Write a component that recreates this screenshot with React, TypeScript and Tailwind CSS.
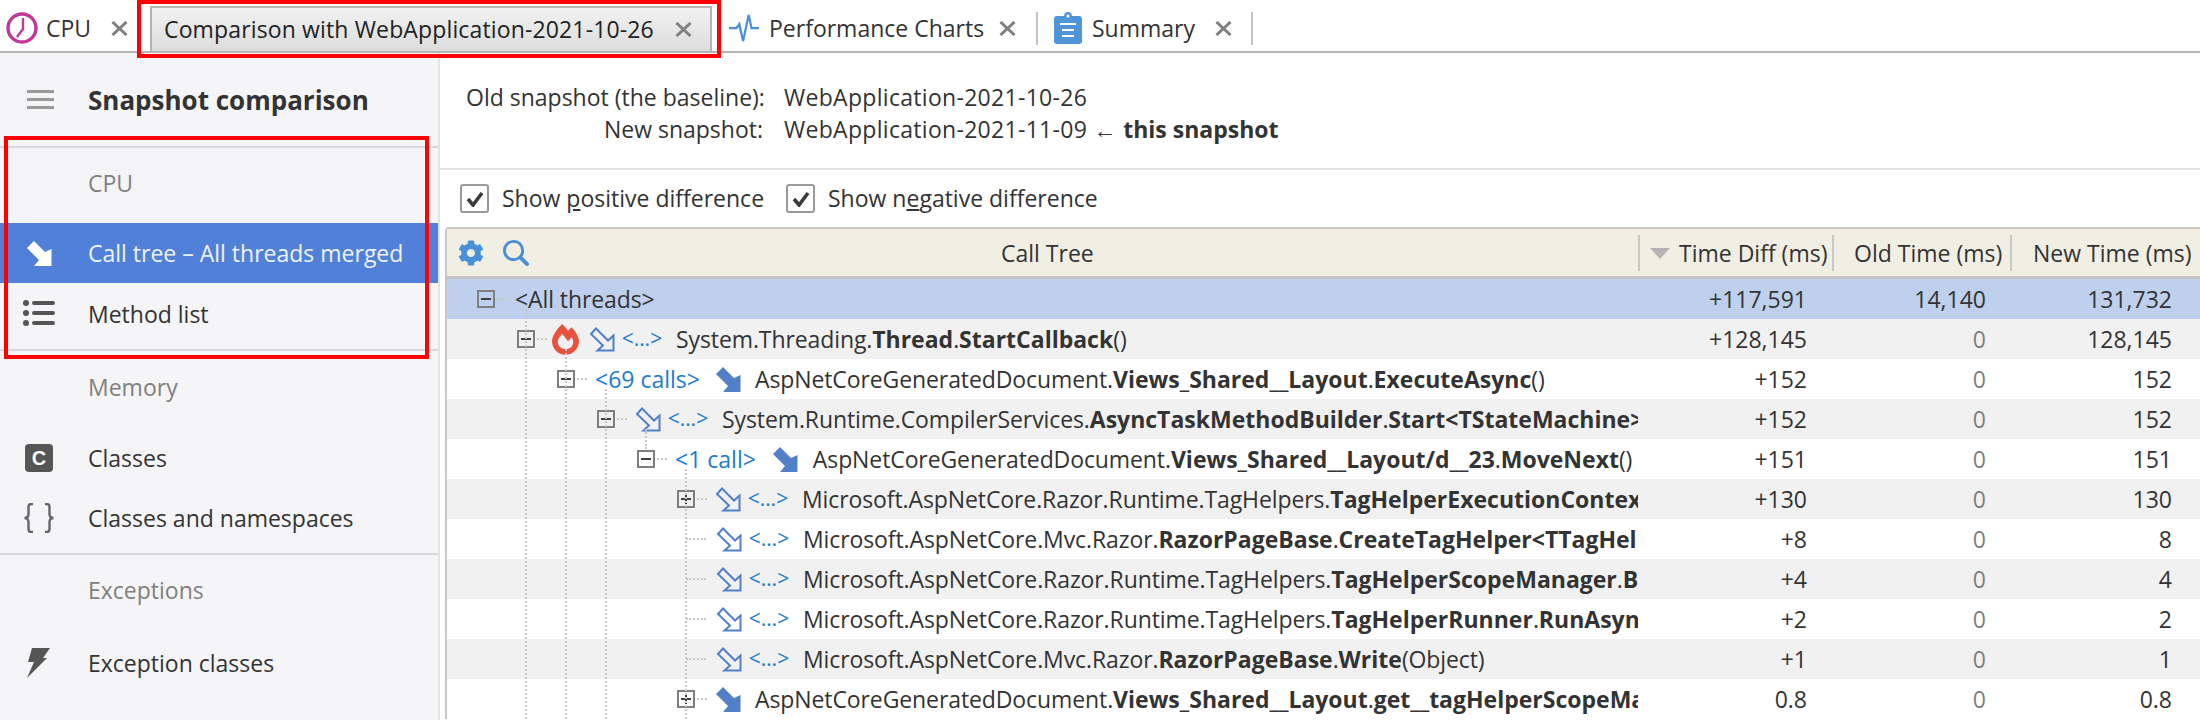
import React from "react";
import { FaCog, FaFireAlt } from "react-icons/fa";

function CloseIcon() {
  return (
    <svg viewBox="0 0 17 15" className="h-[15px] w-[17px] shrink-0">
      <path d="M1.5 1 L15.5 14 M15.5 1 L1.5 14" stroke="#808080" strokeWidth="3" fill="none" />
    </svg>
  );
}

function ClockIcon() {
  return (
    <svg viewBox="0 0 32 32" className="h-[32px] w-[32px] shrink-0">
      <circle cx="16" cy="16" r="14" fill="none" stroke="#c0399a" strokeWidth="3.4" />
      <path d="M17 6 L17 17 L11 25" fill="none" stroke="#c0399a" strokeWidth="2.4" />
    </svg>
  );
}

function PulseIcon() {
  return (
    <svg viewBox="0 0 32 32" className="h-[30px] w-[32px] shrink-0">
      <path d="M0 16 H8 L11 12 L15 30 L21 2 L24 16 H32" fill="none" stroke="#4a90d9" strokeWidth="2.4" />
    </svg>
  );
}

function ClipboardIcon() {
  return (
    <svg viewBox="0 0 28 32" className="h-[32px] w-[28px] shrink-0">
      <path d="M3 4 H10 Q10.5 0 14 0 Q17.5 0 18 4 H25 Q28 4 28 7 V29 Q28 32 25 32 H3 Q0 32 0 29 V7 Q0 4 3 4 Z" fill="#4f96d9" />
      <path d="M6 12 H22 M8 18 H20 M8 24 H20" stroke="#fff" strokeWidth="2.2" />
      <circle cx="14" cy="4" r="1.5" fill="#fff" />
    </svg>
  );
}

function CallArrow({ kind }: { kind: "filled" | "outline" | "white" }) {
  if (kind === "outline") {
    return (
      <svg viewBox="0 0 26 25" className="h-[25px] w-[26px] shrink-0">
        <path d="M7 1.5 L19 13.5 L24.5 8.5 V23.5 H8.5 L14 18.5 L2 7 Z" fill="none" stroke="#5180c8" strokeWidth="2" />
      </svg>
    );
  }
  return (
    <svg viewBox="0 0 26 25" className="h-[25px] w-[26px] shrink-0">
      <path d="M8 0 L19 11 L25.5 8 V25 H8 L13 19 L1 7 Z" fill={kind === "white" ? "#ffffff" : "#5180c8"} />
    </svg>
  );
}

function Expander({ open }: { open: boolean }) {
  return (
    <span className="flex h-[18px] w-[18px] shrink-0 items-center justify-center border-2 border-[#7f7f7f]">
      <svg viewBox="0 0 12 12" className="h-[12px] w-[12px]">
        <path d={open ? "M1 6 H11" : "M1 6 H11 M6 1 V11"} stroke="#404040" strokeWidth="2" />
      </svg>
    </span>
  );
}

function Dots() {
  return <span className="ml-[2px] mr-[8px] w-[10px] shrink-0 border-t-2 border-dotted border-[#c8c8c8]" />;
}

function LeafDots() {
  return <span className="ml-[9px] mr-[10px] w-[20px] shrink-0 border-t-2 border-dotted border-[#c8c8c8]" />;
}

function Calls({ children }: { children: React.ReactNode }) {
  return <span className="shrink-0 text-[#1c7cd0]">{children}</span>;
}

function Hidden() {
  return (
    <span className="ml-[6px] mr-[13px] w-[42px] shrink-0 text-center text-[21px] text-[#1c7cd0]">&lt;…&gt;</span>
  );
}

type RowData = {
  pad: string;
  bg: string;
  lead: React.ReactNode;
  name: React.ReactNode;
  diff: string;
  old: string;
  next: string;
};

const B = ({ children }: { children: React.ReactNode }) => <b className="font-bold tracking-normal">{children}</b>;

const rows: RowData[] = [
  {
    pad: "pl-[30px]",
    bg: "bg-[#bed0ed]",
    lead: (
      <>
        <Expander open />
        <Dots />
      </>
    ),
    name: <>&lt;All threads&gt;</>,
    diff: "+117,591",
    old: "14,140",
    next: "131,732",
  },
  {
    pad: "pl-[70px]",
    bg: "bg-[#f1f1f1]",
    lead: (
      <>
        <Expander open />
        <span className="ml-[2px] mr-[5px] w-[10px] shrink-0 border-t-2 border-dotted border-[#c8c8c8]" />
        <FaFireAlt className="mr-[10px] h-[31px] w-[27px] shrink-0 text-[#e8533f]" />
        <CallArrow kind="outline" />
        <Hidden />
      </>
    ),
    name: (
      <>
        System.Threading.<B>Thread</B>.<B>StartCallback</B>()
      </>
    ),
    diff: "+128,145",
    old: "0",
    next: "128,145",
  },
  {
    pad: "pl-[110px]",
    bg: "bg-white",
    lead: (
      <>
        <Expander open />
        <Dots />
        <Calls>&lt;69 calls&gt;</Calls>
        <span className="w-[15px] shrink-0" />
        <CallArrow kind="filled" />
        <span className="w-[14px] shrink-0" />
      </>
    ),
    name: (
      <>
        AspNetCoreGeneratedDocument.<B>Views_Shared__Layout</B>.<B>ExecuteAsync</B>()
      </>
    ),
    diff: "+152",
    old: "0",
    next: "152",
  },
  {
    pad: "pl-[150px]",
    bg: "bg-[#f1f1f1]",
    lead: (
      <>
        <Expander open />
        <Dots />
        <CallArrow kind="outline" />
        <Hidden />
      </>
    ),
    name: (
      <>
        System.Runtime.CompilerServices.<B>AsyncTaskMethodBuilder</B>.<B>Start&lt;TStateMachine&gt;</B>
      </>
    ),
    diff: "+152",
    old: "0",
    next: "152",
  },
  {
    pad: "pl-[190px]",
    bg: "bg-white",
    lead: (
      <>
        <Expander open />
        <Dots />
        <Calls>&lt;1 call&gt;</Calls>
        <span className="w-[16px] shrink-0" />
        <CallArrow kind="filled" />
        <span className="w-[15px] shrink-0" />
      </>
    ),
    name: (
      <>
        AspNetCoreGeneratedDocument.<B>Views_Shared__Layout/d__23</B>.<B>MoveNext</B>()
      </>
    ),
    diff: "+151",
    old: "0",
    next: "151",
  },
  {
    pad: "pl-[230px]",
    bg: "bg-[#f1f1f1]",
    lead: (
      <>
        <Expander open={false} />
        <Dots />
        <CallArrow kind="outline" />
        <Hidden />
      </>
    ),
    name: (
      <>
        Microsoft.AspNetCore.Razor.Runtime.TagHelpers.<B>TagHelperExecutionContext</B>
      </>
    ),
    diff: "+130",
    old: "0",
    next: "130",
  },
  {
    pad: "pl-[230px]",
    bg: "bg-white",
    lead: (
      <>
        <LeafDots />
        <CallArrow kind="outline" />
        <Hidden />
      </>
    ),
    name: (
      <>
        Microsoft.AspNetCore.Mvc.Razor.<B>RazorPageBase</B>.<B>CreateTagHelper&lt;TTagHelper&gt;</B>
      </>
    ),
    diff: "+8",
    old: "0",
    next: "8",
  },
  {
    pad: "pl-[230px]",
    bg: "bg-[#f1f1f1]",
    lead: (
      <>
        <LeafDots />
        <CallArrow kind="outline" />
        <Hidden />
      </>
    ),
    name: (
      <>
        Microsoft.AspNetCore.Razor.Runtime.TagHelpers.<B>TagHelperScopeManager</B>.<B>Begin</B>
      </>
    ),
    diff: "+4",
    old: "0",
    next: "4",
  },
  {
    pad: "pl-[230px]",
    bg: "bg-white",
    lead: (
      <>
        <LeafDots />
        <CallArrow kind="outline" />
        <Hidden />
      </>
    ),
    name: (
      <>
        Microsoft.AspNetCore.Razor.Runtime.TagHelpers.<B>TagHelperRunner</B>.<B>RunAsync</B>
      </>
    ),
    diff: "+2",
    old: "0",
    next: "2",
  },
  {
    pad: "pl-[230px]",
    bg: "bg-[#f1f1f1]",
    lead: (
      <>
        <LeafDots />
        <CallArrow kind="outline" />
        <Hidden />
      </>
    ),
    name: (
      <>
        Microsoft.AspNetCore.Mvc.Razor.<B>RazorPageBase</B>.<B>Write</B>(Object)
      </>
    ),
    diff: "+1",
    old: "0",
    next: "1",
  },
  {
    pad: "pl-[230px]",
    bg: "bg-white",
    lead: (
      <>
        <Expander open={false} />
        <Dots />
        <CallArrow kind="filled" />
        <span className="w-[14px] shrink-0" />
      </>
    ),
    name: (
      <>
        AspNetCoreGeneratedDocument.<B>Views_Shared__Layout</B>.<B>get__tagHelperScopeManager</B>
      </>
    ),
    diff: "0.8",
    old: "0",
    next: "0.8",
  },
];

function NavItem({ icon, label, active, nudge }: { icon: React.ReactNode; label: string; active?: boolean; nudge?: string }) {
  return (
    <div className={`flex h-[60px] items-center ${active ? "bg-[#5180d8] text-[#eef3fb]" : "text-[#333333]"}`}>
      <span className="flex w-[88px] shrink-0 justify-center pr-[10px]">{icon}</span>
      <span className={nudge}>{label}</span>
    </div>
  );
}

function SectionLabel({ label, box }: { label: string; box: string }) {
  return <div className={`flex items-center pl-[88px] text-[#808080] ${box}`}>{label}</div>;
}

function Checkbox() {
  return (
    <span className="flex h-[29px] w-[29px] shrink-0 items-center justify-center rounded-[3px] border-2 border-[#9a9a9a] bg-white">
      <svg viewBox="0 0 18 16" className="h-[16px] w-[18px]">
        <path d="M2 8 L7 14 L16 2" fill="none" stroke="#3c3c3c" strokeWidth="3.6" />
      </svg>
    </span>
  );
}

export default function App() {
  return (
    <div className="relative h-[720px] w-[2200px] overflow-hidden bg-white font-['Open_Sans',sans-serif] text-[23px] text-[#333333]">
      {/* Tabs */}
      <div className="flex h-[53px] items-center border-b-2 border-[#b5b5b5] pt-[5px]">
        <span className="ml-[6px]">
          <ClockIcon />
        </span>
        <span className="ml-[8px] w-[65px]">CPU</span>
        <CloseIcon />
        <div className="ml-[22px] flex h-[45px] w-[562px] items-center self-end border-2 border-b-0 border-[#b5b5b5] bg-gradient-to-b from-[#f2f2f2] to-[#dcdcdc] pl-[12px] text-[#222222]">
          <span className="w-[511px] whitespace-nowrap tracking-[0.14px]">Comparison with WebApplication-2021-10-26</span>
          <CloseIcon />
        </div>
        <span className="ml-[16px]">
          <PulseIcon />
        </span>
        <span className="ml-[9px] w-[230px] whitespace-nowrap">Performance Charts</span>
        <CloseIcon />
        <span className="ml-[20px] h-[33px] w-[2px] bg-[#c4c4c4]" />
        <span className="ml-[16px]">
          <ClipboardIcon />
        </span>
        <span className="ml-[10px] w-[123px]">Summary</span>
        <CloseIcon />
        <span className="ml-[19px] h-[33px] w-[2px] bg-[#c4c4c4]" />
      </div>

      <div className="flex h-[667px]">
        {/* Sidebar */}
        <div className="w-[440px] shrink-0 border-r-2 border-[#e4e4e4] bg-[#f5f5f8]">
          <div className="flex h-[95px] items-center border-b-2 border-[#d8d8d8]">
            <span className="ml-[27px] flex w-[27px] flex-col gap-[5px]">
              <span className="h-[3px] bg-[#9a9a9a]" />
              <span className="h-[3px] bg-[#9a9a9a]" />
              <span className="h-[3px] bg-[#9a9a9a]" />
            </span>
            <span className="ml-[34px] pt-[2px] text-[26px] font-bold text-[#333333]">Snapshot comparison</span>
          </div>
          <SectionLabel label="CPU" box="h-[75px] pb-[5px]" />
          <NavItem active nudge="pt-[1px]" label="Call tree – All threads merged" icon={<CallArrow kind="white" />} />
          <NavItem
            nudge="pt-[3px]"
            label="Method list"
            icon={
              <svg viewBox="0 0 32 26" className="h-[26px] w-[32px]">
                <circle cx="3" cy="3" r="3" fill="#555" />
                <circle cx="3" cy="13" r="3" fill="#555" />
                <circle cx="3" cy="23" r="3" fill="#555" />
                <path d="M11 3 H30 M11 13 H30 M11 23 H30" stroke="#555" strokeWidth="4" strokeLinecap="round" />
              </svg>
            }
          />
          <div className="mt-[6px] border-t-2 border-[#d8d8d8]" />
          <SectionLabel label="Memory" box="h-[77px] pb-[4px]" />
          <NavItem
            label="Classes"
            icon={
              <span className="flex h-[28px] w-[28px] items-center justify-center rounded-[4px] bg-[#555555] font-['Liberation_Sans',sans-serif] text-[20px] font-bold text-white">
                C
              </span>
            }
          />
          <NavItem
            label="Classes and namespaces"
            icon={
              <svg viewBox="0 0 32 30" className="h-[30px] w-[32px]">
                <path
                  d="M10 1 H8 Q5.5 1 5.5 4 V11 Q5.5 15 1.5 15 Q5.5 15 5.5 19 V26 Q5.5 29 8 29 H10 M22 1 H24 Q26.5 1 26.5 4 V11 Q26.5 15 30.5 15 Q26.5 15 26.5 19 V26 Q26.5 29 24 29 H22"
                  fill="none"
                  stroke="#666"
                  strokeWidth="2.4"
                />
              </svg>
            }
          />
          <div className="mt-[5px] border-t-2 border-[#d8d8d8]" />
          <SectionLabel label="Exceptions" box="h-[78px] pb-[7px]" />
          <NavItem
            label="Exception classes"
            icon={
              <svg viewBox="0 0 24 30" className="h-[30px] w-[24px]">
                <path d="M5 0 H23 L16 10 H20 L0 30 L7 14 H1 Z" fill="#555" />
              </svg>
            }
          />
        </div>

        {/* Main */}
        <div className="min-w-0 flex-1">
          <div className="h-[117px] border-b-2 border-[#e2e2e2] pl-[26px] pt-[28px]">
            <div className="flex h-[32px] items-center">
              <span className="w-[297px] whitespace-nowrap text-right">Old snapshot (the baseline):</span>
              <span className="ml-[21px] tracking-[0.3px]">WebApplication-2021-10-26</span>
            </div>
            <div className="flex h-[32px] items-center">
              <span className="w-[297px] text-right">New snapshot:</span>
              <span className="ml-[21px] tracking-[0.3px]">WebApplication-2021-11-09</span>
              <span className="ml-[6px]">←</span>
              <b className="ml-[7px] font-bold">this snapshot</b>
            </div>
          </div>

          <div className="flex h-[57px] items-center pl-[20px]">
            <Checkbox />
            <span className="ml-[13px] w-[284px] whitespace-nowrap">
              Show <u>p</u>ositive difference
            </span>
            <Checkbox />
            <span className="ml-[13px] whitespace-nowrap">
              Show n<u>e</u>gative difference
            </span>
          </div>

          {/* Table */}
          <div className="relative ml-[5px] rounded-tl-[4px] border-l-2 border-t-2 border-[#c8c8c8]">
            <div className="flex h-[50px] items-center border-b-[3px] border-[#c4c4c4] bg-[#f1eee3]">
              <div className="flex w-[1191px] shrink-0 items-center pl-[11px]">
                <FaCog className="h-[26px] w-[26px] text-[#4a90d9]" />
                <svg viewBox="0 0 28 28" className="ml-[18px] h-[27px] w-[27px]">
                  <circle cx="12" cy="12" r="9.5" fill="none" stroke="#4a90d9" strokeWidth="3" />
                  <path d="M19 19 L26 26" stroke="#4a90d9" strokeWidth="4" strokeLinecap="round" />
                </svg>
                <span className="ml-[472px] pt-[2px]">Call Tree</span>
              </div>
              <div className="flex h-[36px] w-[194px] shrink-0 items-center border-l-2 border-[#c8c8c8] pl-[10px] pt-[2px]">
                <span className="h-0 w-0 border-x-[10px] border-t-[11px] border-x-transparent border-t-[#b4b4b4]" />
                <span className="ml-[9px] whitespace-nowrap">Time Diff (ms)</span>
              </div>
              <div className="flex h-[36px] w-[178px] shrink-0 items-center whitespace-nowrap border-l-2 border-[#c8c8c8] pl-[20px] pt-[2px]">
                Old Time (ms)
              </div>
              <div className="flex h-[36px] flex-1 items-center whitespace-nowrap border-l-2 border-[#c8c8c8] pl-[21px] pt-[2px]">
                New Time (ms)
              </div>
            </div>

            <div className="relative">
              {rows.map((row, i) => (
                <div key={i} className={`flex h-[40px] items-center ${row.bg}`}>
                  <div className={`flex w-[1191px] shrink-0 items-center overflow-hidden whitespace-nowrap ${row.pad}`}>
                    {row.lead}
                    <span className="tracking-[-0.1px]">{row.name}</span>
                  </div>
                  <div className="w-[194px] shrink-0 pr-[25px] text-right">{row.diff}</div>
                  <div className={`w-[178px] shrink-0 pr-[24px] text-right ${row.old === "0" ? "text-[#7f7f7f]" : ""}`}>
                    {row.old}
                  </div>
                  <div className="flex-1 pr-[28px] text-right">{row.next}</div>
                </div>
              ))}
              {/* Tree guides */}
              <span className="absolute bottom-0 left-[78px] top-[30px] border-l-2 border-dotted border-[#c8c8c8]" />
              <span className="absolute bottom-0 left-[118px] top-[70px] border-l-2 border-dotted border-[#c8c8c8]" />
              <span className="absolute bottom-0 left-[158px] top-[110px] border-l-2 border-dotted border-[#c8c8c8]" />
              <span className="absolute left-[198px] top-[150px] h-[20px] border-l-2 border-dotted border-[#c8c8c8]" />
              <span className="absolute bottom-0 left-[238px] top-[190px] border-l-2 border-dotted border-[#c8c8c8]" />
            </div>
          </div>
        </div>
      </div>

      {/* Annotation boxes */}
      <div className="absolute left-[137px] top-0 h-[58px] w-[584px] border-4 border-[#ff0000]" />
      <div className="absolute left-[4px] top-[136px] h-[223px] w-[425px] border-4 border-[#ff0000]" />
    </div>
  );
}
